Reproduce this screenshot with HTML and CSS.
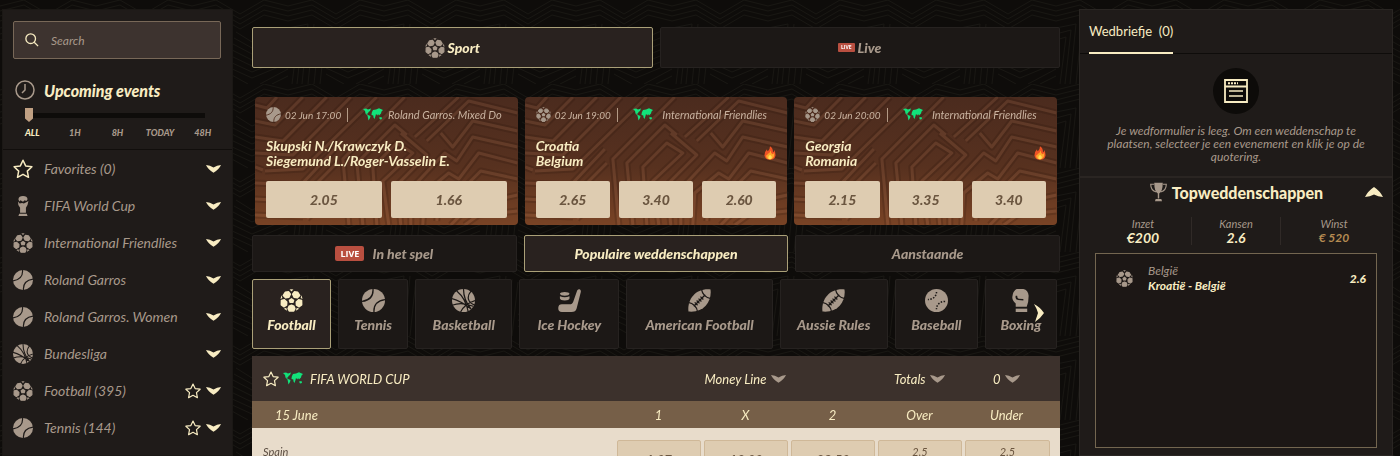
FILE: index.html
```html
<!DOCTYPE html>
<html lang="nl">
<head>
    <meta charset="UTF-8">
    <meta name="viewport" content="width=device-width, initial-scale=1.0">
    <title>Sport</title>
    <link rel="stylesheet" href="styles.css">
</head>
<body>
    <!-- Icons -->
    <svg class="sprite" aria-hidden="true">
        <defs>
            <mask id="tennis-cut">
                <rect width="24" height="24" fill="#fff"/>
                <path d="M11.5 0C12 8 7 12 0 13M12.500 24C12 16 17 12 24 11" fill="none" stroke="#000" stroke-width="1.400"/>
            </mask>
            <mask id="basket-cut">
                <rect width="24" height="24" fill="#fff"/>
                <path d="M5 2C11 7 15 13 17 24M12 0C12 8 14 14 20 21M0 10C8 12 15 17 20 21M0 17C8 14 17 16 22 18M20 2C15 8 16 14 24 17M9 24C11 19 17 14 24 12" fill="none" stroke="#000" stroke-width="1.300"/>
            </mask>
            <mask id="rugby-cut">
                <rect width="24" height="24" fill="#fff"/>
                <path d="M14 0C15 6 18 9 24 10M0 14C6 15 9 18 10 24M6 18L18 6M7 14l3 3M9 12l3 3M11 10l3 3M13 8l3 3" fill="none" stroke="#000" stroke-width="1.300"/>
            </mask>
            <mask id="base-cut">
                <rect width="24" height="24" fill="#fff"/>
                <path d="M12 3C12 8 8 11 3 11M21 13C16 13 12 16 12 21" fill="none" stroke="#000" stroke-width="1.600" stroke-dasharray="1.600 1.500"/>
            </mask>
            <pattern id="lines" width="96" height="84" patternUnits="userSpaceOnUse">
                <g fill="none" stroke="#191713" stroke-width="1">
                    <path d="M0 6L24 0L48 14L72 0L96 6M0 11L24 5L48 19L72 5L96 11M0 16L24 10L48 24L72 10L96 16M0 21L24 15L48 29L72 15L96 21"/>
                    <path d="M0 28L20 24L14 84M0 34L15 30L9 84M0 40L10 37L4 84M26 24L20 84M32 27L26 84M38 30L32 84"/>
                    <path d="M44 32L60 42L92 28M42 38L60 48L96 33M41 44L60 54L96 39M40 50L60 60L96 45M39 56L60 66L96 51M38 62L60 72L96 57M38 68L60 78L96 63M38 74L56 84M68 84L96 69M80 84L96 76"/>
                </g>
            </pattern>
        </defs>
        <symbol id="football" viewBox="0 0 24 24">
            <path d="M5.500 3.500L9 3L10.800 5.500L9.300 8.500L5.800 9.200L3.500 6.800ZM18.500 3.500L15 3L13.200 5.500L14.700 8.500L18.200 9.200L20.500 6.800ZM1.500 12L4.500 11.300L7 13.700L6.800 16.800L4 18.500L1.400 16.500ZM22.500 12L19.500 11.300L17 13.700L17.200 16.800L20 18.500L22.600 16.500ZM9.500 18L12 17L14.500 18L15.500 20.500L14.300 23H9.700L8.500 20.500Z" stroke="currentColor" stroke-width="1.600" stroke-linejoin="round"/>
            <path d="M12 9.300L15 11.500L14 14.700H10L9 11.500ZM10 .5Q12 0 14 .5L12 2.500ZM1.500 6.500L2.500 9.500L.5 10.500ZM22.500 6.500L21.500 9.500L23.500 10.500ZM4 20.500L6.500 19.500L7.500 22.700ZM20 20.500L17.500 19.500L16.500 22.700Z"/>
        </symbol>
        <symbol id="tennis" viewBox="0 0 24 24"><circle cx="12" cy="12" r="12" mask="url(#tennis-cut)"/></symbol>
        <symbol id="basketball" viewBox="0 0 24 24"><circle cx="12" cy="12" r="12" mask="url(#basket-cut)"/></symbol>
        <symbol id="baseball" viewBox="0 0 24 24"><circle cx="12" cy="12" r="12" mask="url(#base-cut)"/></symbol>
        <symbol id="rugby" viewBox="0 0 24 24"><path d="M.5 23.500C-1 12 7-1 23.500 .5C25 13 17 25 .5 23.500Z" mask="url(#rugby-cut)"/></symbol>
        <symbol id="hockey" viewBox="0 0 24 24">
            <path d="M20 1.500Q21 0 22.500 .3Q24.200 1 23.800 3L19.500 20Q18.500 24 14 24H4Q0 24 .3 19.500Q.5 16 4 16H12Q15 16 16 13Z"/>
            <path d="M2 5Q2.500 3 7 3Q11.500 3 12 5Q11.500 7 7 7Q2.500 7 2 5ZM2 7.500Q7 9.800 12 7.500V10Q11.500 12 7 12Q2.500 12 2 10Z"/>
        </symbol>
        <symbol id="boxing" viewBox="0 0 24 24">
            <path fill-rule="evenodd" d="M8 0H15Q20 1 20.500 7Q20.500 14 18.500 18.500H7V15Q3 12 3.500 8Q4 2 8 0ZM7 7Q6 11 9.500 11.500L15 12V10.500L10 10.200Q8.500 9.500 8.500 7Z"/>
            <path d="M7 20.500H19V24H7Z"/>
        </symbol>
        <symbol id="cup" viewBox="0 0 24 24">
            <path d="M12 0Q17 0 17.500 4L16 6L14 5L12 7L9 5L7.500 6.500L6.500 4Q7 0 12 0Z"/>
            <path d="M6 6.500L8 9L11 8.500L13 9L16 7.500L18.500 6Q18 11 15.500 14L15.500 20H8.500L8.500 14Q5.500 10 6 6.500ZM7.500 21.200H16.500L17.500 24H6.500Z"/>
        </symbol>
        <symbol id="trophy" viewBox="0 0 24 28">
            <path d="M6 1H18Q18 13 13 16V23H11V16Q6 13 6 1ZM8 24H16L17 27H7Z"/>
            <path d="M6 3H1Q1 12 9 14M18 3H23Q23 12 15 14" fill="none" stroke="currentColor" stroke-width="1.600"/>
        </symbol>
        <symbol id="star" viewBox="0 0 24 24">
            <path d="M12 1.500L15.200 8.300L22.700 9.300L17.200 14.500L18.600 22L12 18.400L5.400 22L6.800 14.500L1.300 9.300L8.800 8.300Z" fill="none" stroke="currentColor" stroke-width="1.800" stroke-linejoin="round"/>
        </symbol>
        <symbol id="chevron" viewBox="0 0 15 8"><path d="M0 0Q4 .4 7.500 2.500Q11 .4 15 0Q13 4.500 7.500 7.800Q2 4.500 0 0Z"/></symbol>
        <symbol id="map" viewBox="0 0 20 13">
            <path d="M0 1L3 .5L5 1.500L8 .5L7 3L5.500 4L5 5.500L3.500 5.500L5 7L7.500 8L7 10L5.500 12.500L5 10L4.500 7.500L2.500 5.500L2 3ZM9 4L10 2L13 1.500L16 .3L20 2L18.500 3.500L18 5.500L16 7.500L15 6L14.500 7.500L13 6L12.500 8L11.500 11L10.500 9.500L10.300 7.500L8.500 7L8.700 5ZM16 9.500L18.500 9L19 11L17 11.500Z"/>
        </symbol>
        <symbol id="flame" viewBox="0 0 14 16">
            <path fill="#ef5325" d="M7 0Q7 4 4.500 6Q3.500 5 3.500 3.500Q0 7 .5 11Q1.500 16 7 16Q13 15.500 13.500 10.500Q13.500 7 12 4.500Q12 6.500 10.500 7Q10.500 2 7 0Z"/>
            <path fill="#ffa62b" d="M7.500 5Q8 8 10 9.500Q12 8 12 8Q12.500 15 7 15.500Q2 15 2.500 10.500Q4 11 4.500 9Q7 8 7.500 5Z"/>
            <path fill="#ffe15a" d="M7 10Q10 12 9 14.500Q7 16 5 14.500Q4.500 12 7 10Z"/>
        </symbol>
        <symbol id="maze" viewBox="0 0 263 128" preserveAspectRatio="none">
            <g fill="none" stroke-linejoin="round">
                <path d="M0 8L12 11L22 0M0 24L20 28L48 0M0 40L28 44L72 0M0 56L38 58L96 0M10 74L48 72L122 0M0 70L8 73"/>
                <path d="M0 86L46 88L80 52M0 102L36 104M0 118L48 120M44 104L82 66M52 122L62 112"/>
                <path d="M94 128L88 62L150 0M108 128L102 66L140 28L152 38M122 128L118 70L142 46L158 56L128 84L134 128M146 128L142 88L172 58L146 36"/>
                <path d="M160 40L180 22L204 0M172 44L214 4L263 16M186 36L198 50L218 24L263 34M156 128L156 92L190 56L202 64L218 40L263 50"/>
                <path d="M168 128L170 96L194 76L204 82L224 56L263 66M182 124L184 104L208 92L226 74L263 82M196 128L216 108L263 98M210 128L224 118L263 114"/>
            </g>
        </symbol>
    </svg>

    <svg class="page-pattern" aria-hidden="true"><rect width="100%" height="100%" fill="url(#lines)"/></svg>

    <div class="layout">
        <aside class="sidebar">
            <div class="search">
                <svg class="search-icon" viewBox="0 0 16 16"><circle cx="6.500" cy="6.500" r="5.500"/><path d="M10.500 10.500L15 15"/></svg>
                <input type="search" placeholder="Search" aria-label="Search">
            </div>
            <h2 class="upcoming">
                <svg class="clock" viewBox="0 0 20 20"><circle cx="10" cy="10" r="9"/><path d="M10 4V10L7 13"/></svg>
                <label for="hours">Upcoming events</label>
            </h2>
            <input class="slider" id="hours" type="range" min="0" max="4" value="0">
            <div class="hours">
                <span class="current">ALL</span><span>1H</span><span>8H</span><span>TODAY</span><span>48H</span>
            </div>
            <nav class="sports-list">
                <a href="#"><svg class="icon cream"><use href="#star"/></svg><span>Favorites (0)</span><svg class="arrow"><use href="#chevron"/></svg></a>
                <a href="#"><svg class="icon"><use href="#cup"/></svg><span>FIFA World Cup</span><svg class="arrow"><use href="#chevron"/></svg></a>
                <a href="#"><svg class="icon"><use href="#football"/></svg><span>International Friendlies</span><svg class="arrow"><use href="#chevron"/></svg></a>
                <a href="#"><svg class="icon"><use href="#tennis"/></svg><span>Roland Garros</span><svg class="arrow"><use href="#chevron"/></svg></a>
                <a href="#"><svg class="icon"><use href="#tennis"/></svg><span>Roland Garros. Women</span><svg class="arrow"><use href="#chevron"/></svg></a>
                <a href="#"><svg class="icon"><use href="#basketball"/></svg><span>Bundesliga</span><svg class="arrow"><use href="#chevron"/></svg></a>
                <a href="#"><svg class="icon"><use href="#football"/></svg><span>Football (395)</span><svg class="star"><use href="#star"/></svg><svg class="arrow"><use href="#chevron"/></svg></a>
                <a href="#"><svg class="icon"><use href="#tennis"/></svg><span>Tennis (144)</span><svg class="star"><use href="#star"/></svg><svg class="arrow"><use href="#chevron"/></svg></a>
            </nav>
        </aside>

        <main class="content">
            <div class="main-tabs">
                <button class="tab active"><svg class="icon"><use href="#football"/></svg>Sport</button>
                <button class="tab"><span class="live-badge small">LIVE</span>Live</button>
            </div>

            <div class="cards">
                <article class="card">
                    <svg class="card-pattern"><use class="shade" href="#maze"/><use href="#maze"/></svg>
                    <div class="card-head">
                        <svg class="card-icon"><use href="#tennis"/></svg>
                        <time>02 Jun 17:00</time>
                        <svg class="map"><use href="#map"/></svg>
                        <span class="league">Roland Garros. Mixed Do</span>
                    </div>
                    <div class="teams">
                        <p>Skupski N./Krawczyk D.<br>Siegemund L./Roger-Vasselin E.</p>
                    </div>
                    <div class="odds"><button>2.05</button><button>1.66</button></div>
                </article>
                <article class="card">
                    <svg class="card-pattern"><use class="shade" href="#maze"/><use href="#maze"/></svg>
                    <div class="card-head">
                        <svg class="card-icon"><use href="#football"/></svg>
                        <time>02 Jun 19:00</time>
                        <svg class="map"><use href="#map"/></svg>
                        <span class="league">International Friendlies</span>
                    </div>
                    <div class="teams">
                        <p>Croatia<br>Belgium</p>
                        <svg class="flame"><use href="#flame"/></svg>
                    </div>
                    <div class="odds"><button>2.65</button><button>3.40</button><button>2.60</button></div>
                </article>
                <article class="card">
                    <svg class="card-pattern"><use class="shade" href="#maze"/><use href="#maze"/></svg>
                    <div class="card-head">
                        <svg class="card-icon"><use href="#football"/></svg>
                        <time>02 Jun 20:00</time>
                        <svg class="map"><use href="#map"/></svg>
                        <span class="league">International Friendlies</span>
                    </div>
                    <div class="teams">
                        <p>Georgia<br>Romania</p>
                        <svg class="flame"><use href="#flame"/></svg>
                    </div>
                    <div class="odds"><button>2.15</button><button>3.35</button><button>3.40</button></div>
                </article>
            </div>

            <div class="filters">
                <button class="tab"><span class="live-badge">LIVE</span>In het spel</button>
                <button class="tab active">Populaire weddenschappen</button>
                <button class="tab">Aanstaande</button>
            </div>

            <div class="sports">
                <button class="sport active"><svg><use href="#football"/></svg>Football</button>
                <button class="sport"><svg><use href="#tennis"/></svg>Tennis</button>
                <button class="sport"><svg><use href="#basketball"/></svg>Basketball</button>
                <button class="sport"><svg><use href="#hockey"/></svg>Ice Hockey</button>
                <button class="sport"><svg><use href="#rugby"/></svg>American Football</button>
                <button class="sport"><svg><use href="#rugby"/></svg>Aussie Rules</button>
                <button class="sport"><svg><use href="#baseball"/></svg>Baseball</button>
                <button class="sport"><svg><use href="#boxing"/></svg>Boxing</button>
                <button class="next" aria-label="Next"><svg viewBox="0 0 10 18"><path d="M0 0Q6 3 10 9Q6 15 1 18Q3 12 4 9Q3 5 0 0Z"/></svg></button>
            </div>

            <table class="events">
                <colgroup><col><col class="odd"><col class="odd"><col class="odd"><col class="odd"><col class="odd-last"></colgroup>
                <thead>
                    <tr class="competition">
                        <th>
                            <div class="competition-name">
                                <svg class="star"><use href="#star"/></svg>
                                <svg class="map"><use href="#map"/></svg>
                                <span>FIFA WORLD CUP</span>
                            </div>
                        </th>
                        <th colspan="3"><span class="market"><select aria-label="Market"><option>Money Line</option></select><svg class="arrow"><use href="#chevron"/></svg></span></th>
                        <th><span class="market"><select aria-label="Second market"><option>Totals</option></select><svg class="arrow"><use href="#chevron"/></svg></span></th>
                        <th><span class="market"><select aria-label="Line"><option>0</option></select><svg class="arrow"><use href="#chevron"/></svg></span></th>
                    </tr>
                    <tr class="date">
                        <th>15 June</th><th>1</th><th>X</th><th>2</th><th>Over</th><th>Under</th>
                    </tr>
                </thead>
                <tbody>
                    <tr>
                        <td>Spain</td>
                        <td><button>1.07</button></td>
                        <td><button>12.00</button></td>
                        <td><button>29.50</button></td>
                        <td><button><small>2.5</small>1.40</button></td>
                        <td><button><small>2.5</small>2.90</button></td>
                    </tr>
                </tbody>
            </table>
        </main>

        <aside class="betslip">
            <div class="slip-tabs"><a href="#">Wedbriefje&nbsp; (0)</a></div>
            <div class="slip-empty">
                <div class="slip-icon">
                    <svg viewBox="0 0 24 24"><path d="M1 1H23V23H1ZM1 7.500H23" stroke-width="1.800"/><path d="M4 4.300H14" stroke-width="2" stroke-dasharray="2 1"/><path d="M5 12H19M5 17H19" stroke-width="1.500"/></svg>
                </div>
                <p>Je wedformulier is leeg. Om een weddenschap te plaatsen, selecteer je een evenement en klik je op de quotering.</p>
            </div>
            <div class="top-title">
                <h2><svg class="trophy"><use href="#trophy"/></svg>Topweddenschappen</h2>
                <button aria-label="Topweddenschappen"><svg viewBox="0 0 18 10"><path d="M0 10Q3 4 9 0Q15 4 18 10Q13 9.500 9 7.500Q5 9.500 0 10Z"/></svg></button>
            </div>
            <dl class="stats">
                <div><dt>Inzet</dt><dd>€200</dd></div>
                <div><dt>Kansen</dt><dd>2.6</dd></div>
                <div><dt>Winst</dt><dd class="win">€ 520</dd></div>
            </dl>
            <div class="top-bets">
                <div class="bet">
                    <svg class="bet-icon"><use href="#football"/></svg>
                    <p>België<strong>Kroatië - België</strong></p>
                    <b>2.6</b>
                </div>
            </div>
        </aside>
    </div>
</body>
</html>
```
FILE: styles.css
```css
* {
    box-sizing: border-box;
}

body {
    margin: 0;
    background-color: #0e0c0a;
    color: #a8998b;
    font-family: Lato, "Liberation Sans", sans-serif;
    font-size: 13px;
    font-style: italic;
    overflow: hidden;
}

h2, p, dl, dd {
    margin: 0;
}

a {
    color: inherit;
    text-decoration: none;
}

svg {
    fill: currentColor;
    flex: none;
    display: block;
}

button, input, select {
    font: inherit;
    color: inherit;
}

button {
    padding: 0;
    border: none;
    background: none;
    cursor: pointer;
}

.sprite {
    position: absolute;
    width: 0;
    height: 0;
}

.page-pattern {
    position: fixed;
    inset: 0;
    width: 100%;
    height: 100%;
    z-index: -1;
}

.layout {
    display: grid;
    grid-template-columns: 231px minmax(0, 1fr) 314px;
    gap: 19px;
    height: 100vh;
    padding: 9px 7px 0 2px;
}

.icon {
    width: 20px;
    height: 20px;
}

.arrow {
    width: 15px;
    height: 8px;
}

.star {
    width: 16px;
    height: 16px;
    color: #f8ecc2;
}

.map {
    width: 20px;
    height: 13px;
    color: #12e27a;
}

/* Left column */
.sidebar {
    background-color: #1f1b19;
    border: 1px solid #1b1815;
    overflow: hidden;
}

.search {
    display: flex;
    align-items: center;
    gap: 12px;
    height: 38px;
    margin: 11px 11px 19px 10px;
    padding: 0 11px;
    background-color: #3d332f;
    border: 1px solid #786858;
    border-radius: 2px;
}

.search-icon {
    width: 14px;
    height: 14px;
    fill: none;
    stroke: #f8ecc2;
    stroke-width: 1.5;
}

.search input {
    flex: 1;
    min-width: 0;
    padding: 0;
    border: none;
    background: none;
    outline: none;
    font-size: 12px;
}

.search input::placeholder {
    color: #a8998b;
}

.upcoming {
    display: flex;
    align-items: center;
    gap: 9px;
    height: 24px;
    padding-left: 12px;
    color: #f8ecc2;
    font-size: 16px;
    font-weight: 900;
}

.clock {
    width: 20px;
    height: 20px;
    fill: none;
    stroke: #a8998b;
    stroke-width: 1.5;
}

.slider {
    appearance: none;
    display: block;
    width: calc(100% - 49px);
    height: 16px;
    margin: 5px 0 0 22px;
    background: linear-gradient(#0e0c0a, #0e0c0a) center / 100% 5px no-repeat;
}

.slider::-webkit-slider-thumb {
    appearance: none;
    width: 8px;
    height: 14px;
    background-color: #c0a083;
    clip-path: polygon(0 0, 100% 0, 100% 75%, 50% 100%, 0 75%);
}

.hours {
    display: grid;
    grid-template-columns: repeat(5, 1fr);
    height: 26px;
    padding: 4px 8px 0;
    text-align: center;
    font-size: 9px;
    line-height: 12px;
    font-weight: 900;
}

.hours .current {
    color: #f8ecc2;
}

.sports-list {
    border-top: 1px solid #110e0c;
    font-size: 14px;
}

.sports-list a {
    display: flex;
    align-items: center;
    gap: 5px;
    height: 37px;
    padding: 0 11px 0 10px;
}

.sports-list span {
    flex: 1;
    padding-left: 6px;
    white-space: nowrap;
}

.sports-list .cream,
.sports-list .arrow {
    color: #f8ecc2;
}

/* Middle column */
.content {
    padding-top: 18px;
    overflow: hidden;
}

.tab,
.sport {
    background-color: #1c1816;
    border: 1px solid #262220;
    border-radius: 2px;
    font-size: 14px;
    font-weight: 900;
}

.tab {
    display: flex;
    justify-content: center;
    align-items: center;
    gap: 8px;
}

.active {
    background-color: #29221f;
    border-color: #aaa078;
    color: #f8ecc2;
}

.main-tabs,
.filters {
    display: grid;
    gap: 7px;
}

.main-tabs {
    grid-template-columns: 1fr 1fr;
}

.main-tabs .tab {
    gap: 3px;
    height: 41px;
}

.main-tabs .icon {
    color: #a8998b;
}

.live-badge {
    padding: 0 5px;
    border-radius: 2px;
    background-color: #b94f40;
    color: #fff;
    font-family: "Open Sans", sans-serif;
    font-size: 9px;
    line-height: 15px;
    font-style: normal;
    font-weight: 700;
}

.live-badge.small {
    padding: 0 3px;
    border-radius: 1px;
    font-size: 5px;
    line-height: 9px;
}

.cards {
    display: grid;
    grid-template-columns: repeat(3, 1fr);
    gap: 7px;
    margin: 29px 3px 10px;
}

.card {
    position: relative;
    min-width: 0;
    padding: 7px 11px;
    border-radius: 4px;
    background: linear-gradient(#4b2b1e, #57311f 55%, #794325);
    overflow: hidden;
}

.card-pattern {
    position: absolute;
    inset: 0;
    width: 100%;
    height: 100%;
    fill: none;
    stroke: #b07a58;
    stroke-width: 3;
    opacity: 0.17;
}

.card-pattern .shade {
    stroke: #1f0e08;
    stroke-width: 7;
}

.card-head,
.teams,
.odds {
    position: relative;
    display: flex;
    align-items: center;
}

.card-head {
    height: 21px;
    font-size: 11px;
    color: #c9b3a0;
    white-space: nowrap;
}

.card-icon {
    width: 15px;
    height: 15px;
    margin-right: 4px;
    color: #a8998b;
}

.card-head time {
    padding-right: 6px;
    border-right: 1px solid #b39a85;
    font-size: 10px;
    line-height: 14px;
}

.card-head .map {
    margin-left: 15px;
}

.league {
    flex: 1;
    text-align: center;
}

.teams {
    justify-content: space-between;
    height: 56px;
    padding-bottom: 1px;
    color: #f8ecc2;
    font-size: 14px;
    line-height: 15px;
    font-weight: 700;
}

.flame {
    width: 12px;
    height: 14px;
}

.odds {
    gap: 9px;
}

.odds button {
    flex: 1;
    height: 37px;
    border-radius: 2px;
    background-color: #deccb1;
    color: #6b5640;
    font-size: 14px;
    font-weight: 900;
}

.filters {
    grid-template-columns: repeat(3, 1fr);
}

.filters .tab {
    height: 37px;
}

.sports {
    position: relative;
    display: grid;
    grid-template-columns: 79fr 70fr 97fr 100fr 146fr 108fr 83fr 72fr;
    gap: 7px;
    margin: 7px 3px 7px 0;
}

.sport {
    display: flex;
    flex-direction: column;
    align-items: center;
    gap: 4px;
    height: 70px;
    padding: 9px 0 0;
    white-space: nowrap;
}

.sport svg {
    width: 23px;
    height: 23px;
}

.next {
    position: absolute;
    top: 25px;
    right: 13px;
    color: #f8ecc2;
}

.next svg {
    width: 10px;
    height: 18px;
}

.events {
    width: 100%;
    table-layout: fixed;
    border-collapse: collapse;
    background-color: #e8dccb;
}

.odd {
    width: 87px;
}

.odd-last {
    width: 97px;
}

.events th,
.events td {
    padding: 0;
    text-align: center;
    font-weight: 400;
}

.events th {
    color: #f8ecc2;
}

.events tr > :last-child {
    padding-right: 10px;
}

.competition {
    height: 45px;
    background-color: #3c312c;
}

.competition-name {
    display: flex;
    align-items: center;
    gap: 4px;
    padding-left: 11px;
}

.competition-name span {
    padding-left: 3px;
}

.market {
    display: inline-flex;
    align-items: center;
    gap: 4px;
}

.market select {
    appearance: none;
    padding: 0;
    border: none;
    background: none;
}

.market .arrow {
    color: #a8998b;
}

.date {
    height: 27px;
    background-color: #765f48;
}

.events .date th:first-child {
    padding-left: 23px;
    text-align: left;
}

.events td {
    padding: 12px 1px 12px 2px;
    vertical-align: top;
}

.events td:first-child {
    padding: 17px 11px;
    color: #5c4e43;
    font-size: 11px;
    text-align: left;
}

.events td button {
    width: 100%;
    height: 39px;
    border: 1px solid #cfb898;
    border-radius: 2px;
    background-color: #deccb1;
    color: #6b5640;
    font-weight: 900;
}

.events small {
    display: block;
    font-size: 11px;
    font-weight: 400;
}

/* Right column */
.betslip {
    background-color: #1f1b19;
    border: 1px solid #2a2623;
    overflow: hidden;
}

.slip-tabs {
    display: flex;
    height: 44px;
    padding-left: 9px;
    border-bottom: 1px solid #0e0c0a;
}

.slip-tabs a {
    height: 44px;
    border-bottom: 2px solid #f8ecc2;
    color: #f8ecc2;
    font-style: normal;
    line-height: 42px;
}

.slip-empty {
    padding: 14px 22px 13px;
    border-bottom: 2px solid #2a2522;
    text-align: center;
    font-size: 12px;
    line-height: 13px;
}

.slip-icon {
    display: flex;
    align-items: center;
    justify-content: center;
    width: 46px;
    height: 46px;
    margin: 0 auto 10px;
    border-radius: 50%;
    background-color: #0d0b09;
}

.slip-icon svg {
    width: 24px;
    height: 24px;
    fill: none;
    stroke: #f8ecc2;
}

.top-title {
    display: flex;
    align-items: center;
    height: 28px;
    padding-right: 9px;
    color: #f8ecc2;
}

.top-title h2 {
    flex: 1;
    display: flex;
    align-items: center;
    justify-content: center;
    gap: 5px;
    padding-left: 28px;
    font-size: 16px;
    font-style: normal;
    font-weight: 900;
}

.top-title button svg {
    width: 18px;
    height: 10px;
}

.trophy {
    width: 17px;
    height: 20px;
    color: #a8998b;
}

.stats {
    display: grid;
    grid-template-columns: 97fr 89fr 106fr;
    margin: 11px 5px 8px 15px;
    text-align: center;
}

.stats div {
    height: 28px;
    border-right: 1px solid #302a27;
}

.stats div:last-child {
    border-right: none;
}

.stats dt {
    font-size: 11px;
    line-height: 13px;
}

.stats dd {
    color: #f8ecc2;
    font-size: 14px;
    line-height: 15px;
    font-weight: 700;
}

.stats .win {
    color: #b58b52;
    font-size: 12px;
}

.top-bets {
    min-height: 195px;
    margin: 0 15px;
    background-color: #1c1715;
    border: 1px solid #736650;
}

.bet {
    display: flex;
    align-items: center;
    gap: 15px;
    padding: 9px 10px 0 20px;
    font-size: 12px;
    line-height: 15px;
}

.bet-icon {
    width: 17px;
    height: 17px;
}

.bet p {
    flex: 1;
}

.bet strong {
    display: block;
    color: #f8ecc2;
}

.bet b {
    color: #f8ecc2;
    font-weight: 900;
}
```
